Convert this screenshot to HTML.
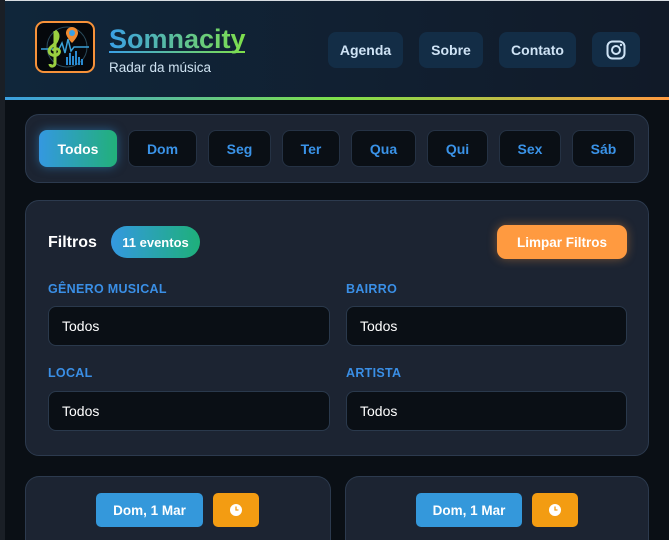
<!DOCTYPE html>
<html><head><meta charset="utf-8"><style>
*{box-sizing:border-box;margin:0;padding:0}
html,body{width:669px;height:540px;overflow:hidden}
body{background:#0a0f15;font-family:"Liberation Sans",sans-serif;position:relative}
.abs{position:absolute}
.strip{left:0;top:0;width:5px;height:540px;background:#1a1f26}
.top{left:5px;top:0;width:664px;height:1px;background:#d8dde2}
.header{left:5px;top:1px;width:664px;height:96px;background:linear-gradient(90deg,#10263a,#111f30 60%,#111a28)}
.line{left:5px;top:97px;width:664px;height:3px;background:linear-gradient(90deg,#3a9fe0,#7ee04a 50%,#ff9a40)}
.logo{left:35px;top:21px;width:60px;height:52px;border:2px solid #f7923a;border-radius:9px;background:#05080c;overflow:hidden}
.title{left:109px;top:23px;font-size:27px;font-weight:bold;background:linear-gradient(90deg,#3aa0e6,#7fe04a);-webkit-background-clip:text;color:transparent;line-height:32px}
.uline{left:109px;top:51px;width:136px;height:2px;background:linear-gradient(90deg,#3aa0e6,#7fe04a)}
.sub{left:109px;top:60px;font-size:13.5px;color:#cfe3f2}
.nav{top:32px;height:36px;background:#132d46;border-radius:8px;color:#cfe3f5;font-size:14px;font-weight:bold;display:flex;align-items:center;justify-content:center}
.panel{background:#1c2432;border:1px solid #2c3a4e;border-radius:14px}
.day{top:130px;height:37px;border:1px solid #253244;background:#0a0f15;border-radius:8px;color:#3a93e8;font-weight:bold;font-size:14px;display:flex;align-items:center;justify-content:center}
.lab{font-size:12.5px;font-weight:bold;color:#3a8fe6;letter-spacing:.3px}
.inp{height:40px;background:#0a0f15;border:1px solid #2a394c;border-radius:8px;color:#fff;font-size:14px;padding-left:13px;display:flex;align-items:center}
</style></head><body>
<div class="abs strip"></div>
<div class="abs top"></div>
<div class="abs header"></div>
<div class="abs line"></div>
<div class="abs logo"><svg width="56" height="48" viewBox="0 0 56 48">
<circle cx="30" cy="24" r="20" fill="none" stroke="#2a4a5a" stroke-width="1"/>
<path d="M4 26 H22 l3-6 3 10 3-14 3 12 3-4 H52" stroke="#3aa0d8" stroke-width="1.5" fill="none"/>
<path d="M18 8 c6 4 2 12 -4 16 c-6 6 4 12 8 6 c2-4 -4-6 -6-2 M18 8 V40 c0 4 -5 4 -5 1" stroke="#9ad040" stroke-width="3" fill="none"/>
<path d="M35 4 a6 6 0 0 1 6 6 c0 4 -6 10 -6 10 c0 0 -6 -6 -6 -10 a6 6 0 0 1 6 -6z" fill="#f08a30"/><circle cx="35" cy="10" r="3" fill="#3aa0e6"/>
<path d="M30 42 V34 M33 42 V30 M36 42 V33 M39 42 V28 M42 42 V34 M45 42 V36" stroke="#2a8ad0" stroke-width="2"/>
</svg></div>
<div class="abs title">Somnacity</div>
<div class="abs uline"></div>
<div class="abs sub">Radar da música</div>
<div class="abs nav" style="left:328px;width:75px">Agenda</div>
<div class="abs nav" style="left:419px;width:64px">Sobre</div>
<div class="abs nav" style="left:499px;width:77px">Contato</div>
<div class="abs nav" style="left:592px;width:48px;height:35px"><svg width="20" height="20" viewBox="0 0 20 20"><rect x="1.5" y="1.5" width="17" height="17" rx="5" fill="none" stroke="#cfe3f5" stroke-width="2"/><circle cx="10" cy="10" r="4" fill="none" stroke="#cfe3f5" stroke-width="2"/><circle cx="15" cy="5" r="1.2" fill="#cfe3f5"/></svg></div>

<div class="abs panel" style="left:25px;top:114px;width:624px;height:69px"></div>
<div class="abs day" style="left:39px;width:78px;background:linear-gradient(90deg,#3498e0,#22b07a);color:#fff;border:none;box-shadow:0 0 10px rgba(52,152,224,.5)">Todos</div>
<div class="abs day" style="left:128px;width:69px">Dom</div>
<div class="abs day" style="left:208px;width:63px">Seg</div>
<div class="abs day" style="left:282px;width:58px">Ter</div>
<div class="abs day" style="left:351px;width:65px">Qua</div>
<div class="abs day" style="left:427px;width:61px">Qui</div>
<div class="abs day" style="left:499px;width:62px">Sex</div>
<div class="abs day" style="left:572px;width:63px">Sáb</div>

<div class="abs panel" style="left:25px;top:200px;width:624px;height:256px"></div>
<div class="abs" style="left:48px;top:234px;color:#fff;font-size:16px;font-weight:bold">Filtros</div>
<div class="abs" style="left:111px;top:226px;width:89px;height:32px;border-radius:16px;background:linear-gradient(90deg,#3498e0,#1eb07a);color:#fff;font-size:13px;font-weight:bold;display:flex;align-items:center;justify-content:center">11 eventos</div>
<div class="abs" style="left:497px;top:225px;width:130px;height:34px;border-radius:9px;background:#ff9a40;color:#fff;font-size:13.5px;font-weight:bold;display:flex;align-items:center;justify-content:center;box-shadow:0 0 10px rgba(255,154,64,.4)">Limpar Filtros</div>
<div class="abs lab" style="left:48px;top:282px">GÊNERO MUSICAL</div>
<div class="abs lab" style="left:346px;top:282px">BAIRRO</div>
<div class="abs inp" style="left:48px;top:306px;width:282px">Todos</div>
<div class="abs inp" style="left:346px;top:306px;width:281px">Todos</div>
<div class="abs lab" style="left:48px;top:366px">LOCAL</div>
<div class="abs lab" style="left:346px;top:366px">ARTISTA</div>
<div class="abs inp" style="left:48px;top:391px;width:282px">Todos</div>
<div class="abs inp" style="left:346px;top:391px;width:281px">Todos</div>

<div class="abs panel" style="left:25px;top:476px;width:306px;height:64px;border-bottom:none;border-radius:14px 14px 0 0"></div>
<div class="abs panel" style="left:345px;top:476px;width:304px;height:64px;border-bottom:none;border-radius:14px 14px 0 0"></div>
<div class="abs" style="left:96px;top:493px;width:107px;height:34px;background:#3498db;border-radius:5px;color:#fff;font-weight:bold;font-size:13.5px;display:flex;align-items:center;justify-content:center">Dom, 1 Mar</div>
<div class="abs" style="left:213px;top:493px;width:46px;height:34px;background:#f39c12;border-radius:5px;display:flex;align-items:center;justify-content:center"><svg width="12" height="12"><circle cx="6" cy="6" r="6" fill="#fff"/><path d="M6 2.5V6H8.5" stroke="#f39c12" stroke-width="1.3" fill="none"/></svg></div>
<div class="abs" style="left:416px;top:493px;width:106px;height:34px;background:#3498db;border-radius:5px;color:#fff;font-weight:bold;font-size:13.5px;display:flex;align-items:center;justify-content:center">Dom, 1 Mar</div>
<div class="abs" style="left:532px;top:493px;width:46px;height:34px;background:#f39c12;border-radius:5px;display:flex;align-items:center;justify-content:center"><svg width="12" height="12"><circle cx="6" cy="6" r="6" fill="#fff"/><path d="M6 2.5V6H8.5" stroke="#f39c12" stroke-width="1.3" fill="none"/></svg></div>
</body></html>
